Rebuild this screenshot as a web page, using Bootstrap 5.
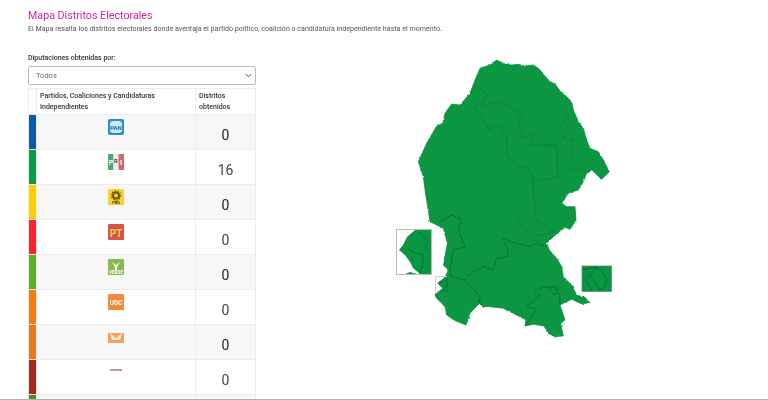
<!DOCTYPE html>
<html lang="es"><head><meta charset="utf-8"><title>Mapa Distritos Electorales</title>
<link href="https://cdn.jsdelivr.net/npm/bootstrap@5.3.0/dist/css/bootstrap.min.css" rel="stylesheet">
<style>
html,body{height:400px;overflow:hidden}
body{font-family:Roboto,"Liberation Sans",sans-serif;color:#444;background:#fff}
.page-wrap{height:400px;overflow:hidden;padding:9px 0 0 28px;filter:blur(.3px)}
.base-rule{position:absolute;left:0;right:0;bottom:0;height:1px;background:#a5b8b4}
.map-title{font-size:10.7px;line-height:13px;font-weight:400;color:#d6249f;margin:0 0 1px}
.map-desc{font-size:7.1px;line-height:12px;color:#555;margin:0 0 18px}
.left-col{width:228px;flex:none}
.sel-label{font-size:7px;line-height:11px;font-weight:500;color:#333;margin:0 0 2px;display:block}
.sel-box{font-size:7.5px;height:19px;min-height:0;padding:0 7px;border-radius:2px;border-color:#bbb;color:#666;background-position:right 3px center;background-size:7px 7px}
.dist-table{width:228px;table-layout:fixed;margin:3px 0 0;--bs-table-striped-bg:#f7f7f7;--bs-border-color:#ececec;font-size:7px}
.dist-table th{font-weight:500;font-size:7px;line-height:10.5px;padding:2px 3px;color:#333;height:25px;vertical-align:middle}
.dist-table td{height:35px;padding:0;vertical-align:top;text-align:center;font-size:14px;color:#444}
.dist-table>tbody>tr>td.cell-swatch{box-shadow:none;border-top-color:transparent;border-bottom-color:transparent}
.swatch-blue{--bs-table-bg:#0b5aa5}.swatch-green{--bs-table-bg:#0a9a48}.swatch-yellow{--bs-table-bg:#ffd000}.swatch-red{--bs-table-bg:#ff2030}
.swatch-lime{--bs-table-bg:#5eae2e}.swatch-orange{--bs-table-bg:#f57c10}.swatch-amber{--bs-table-bg:#e8791f}.swatch-maroon{--bs-table-bg:#a3261f}.swatch-olive{--bs-table-bg:#4f8a1e}
.cell-swatch{width:8px}
.cell-party{width:159px}
.logo-slot{display:block;width:16px;height:16px;margin:4px auto 0}
.num-val{display:block;padding-top:12px;line-height:17px}
.map-canvas{position:absolute;left:0;top:0;pointer-events:none}
</style></head><body>
<div class="page-wrap">
<h1 class="map-title">Mapa Distritos Electorales</h1>
<p class="map-desc">El Mapa resalta los distritos electorales donde aventaja el partido político, coalición o candidatura independiente hasta el momento.</p>
<div class="d-flex">
<div class="left-col">
<label class="sel-label">Diputaciones obtenidas por:</label>
<select class="form-select sel-box"><option>Todos</option></select>
<table class="table table-striped table-bordered dist-table">
<thead><tr><th class="cell-swatch"></th><th class="cell-party">Partidos, Coaliciones y Candidaturas Independientes</th><th>Distritos obtenidos</th></tr></thead>
<tbody>
<tr><td class="cell-swatch swatch-blue"></td><td><svg class="logo-slot" viewBox="0 0 16 16"><rect width="16" height="16" rx="2" fill="#2b8fc8"/><rect x="2" y="2" width="12" height="12" rx="3" fill="#cfe8f4"/><text x="8" y="10.5" font-size="6" font-weight="700" text-anchor="middle" fill="#1f6fa8">PAN</text></svg></td><td><span class="num-val">0</span></td></tr>
<tr><td class="cell-swatch swatch-green"></td><td><svg class="logo-slot" viewBox="0 0 16 16"><rect width="5.5" height="16" rx="1" fill="#4fa672"/><rect x="5.5" width="5" height="16" fill="#eee"/><rect x="10.500" width="5.500" height="16" rx="1" fill="#d5656c"/><text x="3" y="11" font-size="7" font-weight="700" text-anchor="middle" fill="#fff">P</text><text x="8" y="9" font-size="6" font-weight="700" text-anchor="middle" fill="#444">R</text><text x="13" y="11" font-size="7" font-weight="700" text-anchor="middle" fill="#fff">I</text></svg></td><td><span class="num-val">16</span></td></tr>
<tr><td class="cell-swatch swatch-yellow"></td><td><svg class="logo-slot" viewBox="0 0 16 16"><rect width="16" height="16" rx="1" fill="#f6d32d"/><circle cx="8" cy="6.5" r="3" fill="none" stroke="#6b5a10" stroke-width="2"/><circle cx="8" cy="6.5" r="4.6" fill="none" stroke="#6b5a10" stroke-width="1.2" stroke-dasharray="1.4 1.4"/><text x="8" y="15" font-size="4" font-weight="700" text-anchor="middle" fill="#4a3f10">PRD</text></svg></td><td><span class="num-val">0</span></td></tr>
<tr><td class="cell-swatch swatch-red"></td><td><svg class="logo-slot" viewBox="0 0 16 16"><rect width="16" height="16" rx="1" fill="#d8534a"/><text x="8" y="13" font-size="10" font-weight="700" text-anchor="middle" fill="#f6d64a">PT</text></svg></td><td><span class="num-val">0</span></td></tr>
<tr><td class="cell-swatch swatch-lime"></td><td><svg class="logo-slot" viewBox="0 0 16 16"><rect width="16" height="16" rx="1" fill="#85bb4e"/><path d="M4 3l4 3 4-3-3 5v3H7V8z" fill="#fff"/><text x="8" y="15" font-size="4.6" font-weight="700" text-anchor="middle" fill="#fff">VERDE</text></svg></td><td><span class="num-val">0</span></td></tr>
<tr><td class="cell-swatch swatch-orange"></td><td><svg class="logo-slot" viewBox="0 0 16 16"><rect width="16" height="16" rx="1" fill="#f58a3c"/><text x="8" y="10.500" font-size="6.400" font-weight="700" text-anchor="middle" fill="#fff">UDC</text></svg></td><td><span class="num-val">0</span></td></tr>
<tr><td class="cell-swatch swatch-amber"></td><td><svg class="logo-slot" viewBox="0 0 16 16"><path d="M0 4h16v10H0z" fill="#f4a260"/><path d="M2 4l6 5 6-5-2 7H4z" fill="#fff" opacity=".75"/></svg></td><td><span class="num-val">0</span></td></tr>
<tr><td class="cell-swatch swatch-maroon"></td><td><svg class="logo-slot" viewBox="0 0 16 16"><text x="8" y="7" font-size="3.400" font-weight="700" text-anchor="middle" fill="#8a3a4a">morena</text></svg></td><td><span class="num-val">0</span></td></tr>
<tr><td class="cell-swatch swatch-olive"></td><td><svg class="logo-slot" viewBox="0 0 16 16"><rect width="16" height="16" rx="1" fill="#c48ab8"/></svg></td><td></td></tr>
</tbody></table>
</div>
</div>
</div>
<div class="base-rule"></div>
<svg class="map-canvas" width="768" height="400" viewBox="0 0 768 400">
<defs><filter id="rough" x="-5%" y="-5%" width="110%" height="110%"><feTurbulence type="fractalNoise" baseFrequency=".35" numOctaves="2" seed="4"/><feDisplacementMap in="SourceGraphic" scale="2.2" xChannelSelector="R" yChannelSelector="G"/><feGaussianBlur stdDeviation=".2"/></filter></defs>
<g filter="url(#rough)"><g transform="translate(390 50) scale(.33333)">
<path fill="#079642" stroke="#088c3d" stroke-width="2" stroke-linejoin="round" d="M320 30L345 42 365 45 385 43 405 48 430 45 445 55 462 75 480 95 495 102 510 122 525 135 545 155 550 180 565 215 580 235 590 270 600 295 625 305 640 330 658 365 635 388 605 360 590 370 580 395 565 420 535 430 515 460 530 470 555 470 558 510 540 538 525 532 490 560 470 580 478 600 500 625 515 650 520 680 545 705 560 735 585 742 600 758 575 762 545 748 510 765 525 810 512 820 520 858 495 860 475 850 462 828 430 823 405 828 408 810 370 790 340 775 300 770 278 770 268 760 240 790 228 825 195 812 170 795 165 770 140 745 135 735 158 715 143 700 165 682 175 660 160 645 172 580 160 535 120 515 105 420 100 380 85 335 110 280 140 228 158 220 165 190 185 162 210 165 240 130 255 90 270 55 300 45Z"/>
<g fill="none" stroke="#0a7236" stroke-width="1.8" stroke-linejoin="round">
<path d="M240 130L262 105 290 135 275 160 255 170 275 205 298 238 325 225 352 270 350 315 385 350 410 352 428 380 455 392 505 378 498 285 520 265 545 235 520 215 540 190"/>
<path d="M275 168L320 155 365 175 395 200 385 220 400 262 430 255 420 285 495 285"/>
<path d="M520 265L550 270 545 320 555 322M545 355L600 365"/>
<path d="M428 380L432 450 435 470 378 515 435 560 495 545M435 470L438 510 495 545"/>
</g>
<g fill="none" stroke="#085c2a" stroke-width="2" stroke-linejoin="round">
<path d="M150 515L185 495 215 510 205 540 225 590 190 600 180 660 185 680 225 690 250 665 280 650 310 660 320 625 355 620 350 590 335 565 350 570 375 580 400 585 420 590 440 580 472 590"/>
<path d="M225 690L270 740 268 760"/>
<path d="M150 700L165 690 172 705 160 718"/>
<path d="M435 720L460 712 495 712 510 735 510 765M435 720L450 735 410 770 440 780 405 828M480 720a12 12 0 1 0 25 0a12 12 0 1 0-25 0"/>
</g>
</g></g>
<rect x="396.500" y="229.500" width="35" height="45" fill="#fff" stroke="#bbb"/>
<path d="M415 230H431V274H420L413 268 410 262 405 255 399 250 403 245 407 237Z" fill="#079642"/>
<path d="M405 274L410 272 417 274Z" fill="#079642"/>
<path d="M418 232L428 240 425 250M407 248L413 252 423 255 423 262 420 273M412 257L413 262" fill="none" stroke="#085c2a" stroke-width=".7"/>
<path d="M447 276.500H435.500V291H439" fill="none" stroke="#ccc"/>
<path d="M447 277V291H441" fill="none" stroke="#0a6e33" stroke-width=".7"/>
<rect x="582" y="266" width="29.500" height="25.500" fill="#079642" stroke="#5f8f70" stroke-width=".8"/>
<path d="M583 270L590 268 597 267 603 273 607 280 605 287 600 290M597 267L590 275 585 280 590 287 592 291M590 275L598 287 600 290" fill="none" stroke="#085c2a" stroke-width=".7"/>
</svg>
</body></html>
